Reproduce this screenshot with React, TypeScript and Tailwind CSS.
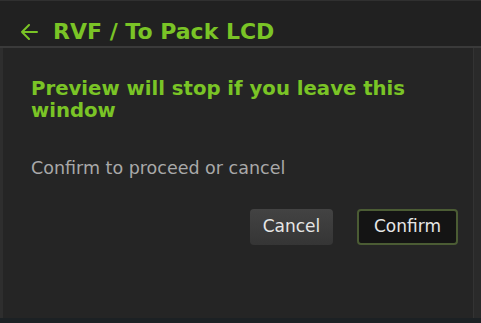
export default function App() {
  return (
    <div className="w-[481px] h-[323px] flex flex-col bg-[#1c2124] overflow-hidden" style={{ fontFamily: '"DejaVu Sans", Verdana, sans-serif' }}>
      {/* Header */}
      <div className="h-[46px] flex items-start pt-[20px] pl-[20px] gap-[15px] bg-[#212121] border-t border-[#303030] flex-shrink-0">
        <svg width="18" height="16" viewBox="0 0 18 16" fill="none" stroke="#7ac426" strokeWidth="2" strokeLinecap="round" strokeLinejoin="round" className="mt-[3px]">
          <path d="M17 8H2M9 1L2 8l7 7" />
        </svg>
        <h1 className="text-[22px] font-bold text-[#7ac426] leading-none">RVF / To Pack LCD</h1>
      </div>
      <div className="h-[2px] bg-[#3a3a3a] flex-shrink-0" />

      {/* Dialog body */}
      <div className="flex-1 flex min-h-0 mb-[5px] bg-[#252525]">
        <div className="w-[3px] bg-[#2e2e2e]" />
        <div className="flex-1 flex flex-col pt-[30px] pl-[28px] pr-[15px]">
          <h2 className="w-[395px] text-[19.7px] font-bold leading-[22px] text-[#7ac426]">
            Preview will stop if you leave this window
          </h2>
          <p className="mt-[36px] text-[17.5px] leading-[20px] text-[#a9a9a9]">Confirm to proceed or cancel</p>
          <div className="mt-[31px] flex justify-end gap-[24px]">
            <button className="w-[83px] h-[36px] rounded-[4px] bg-gradient-to-b from-[#434343] to-[#353535] text-[17px] text-[#e6e6e6]">
              Cancel
            </button>
            <button className="w-[101px] h-[36px] rounded-[4px] bg-[#141414] border-2 border-[#4b5c34] text-[17px] text-[#e6e6e6]">
              Confirm
            </button>
          </div>
        </div>
        <div className="w-[8px] bg-[#2a2a2a] border-l border-[#333333]" />
      </div>
    </div>
  );
}
